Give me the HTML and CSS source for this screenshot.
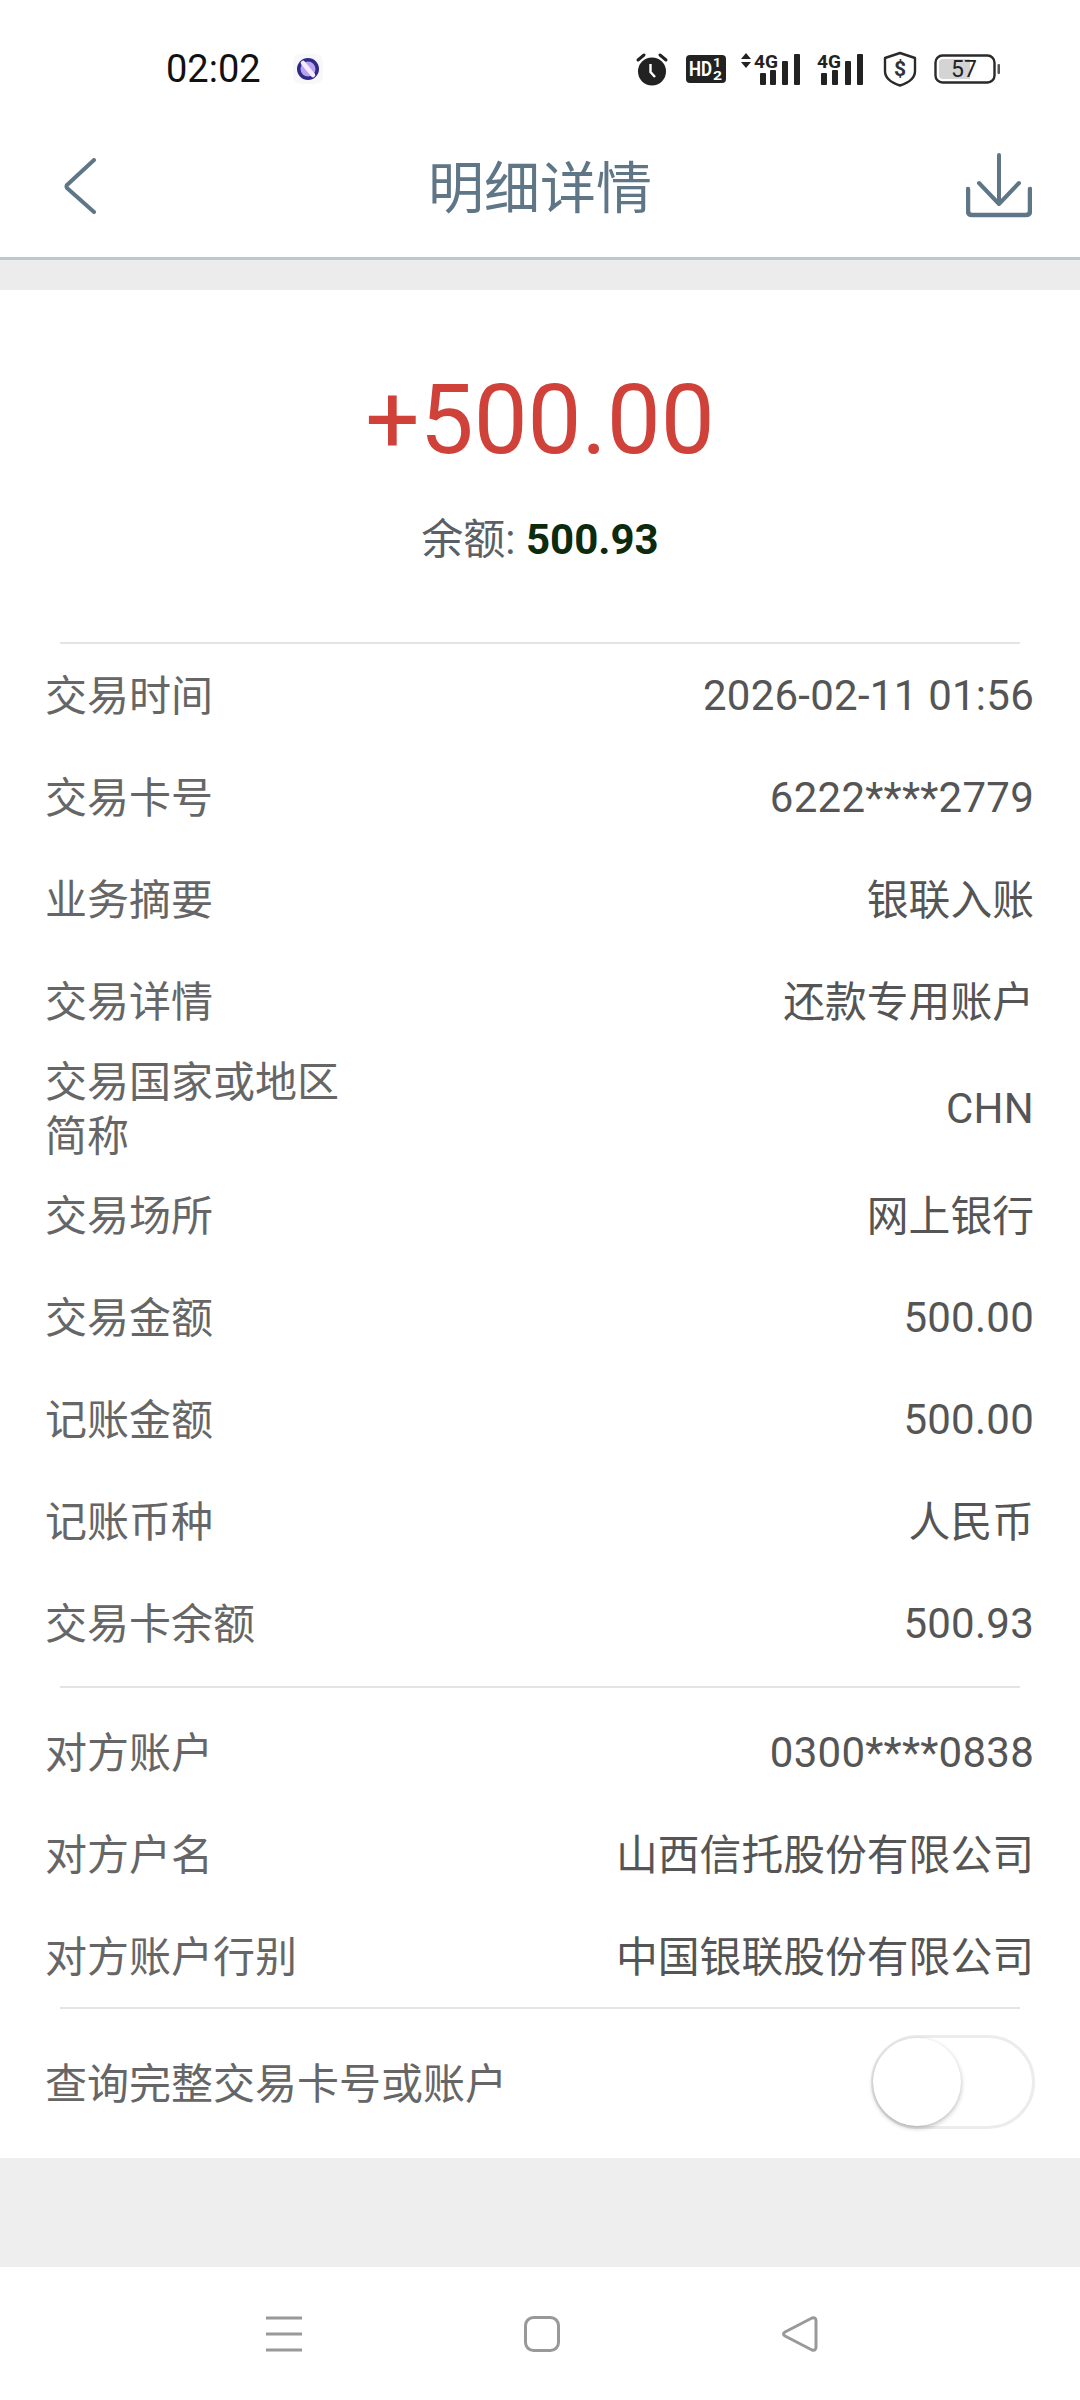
FILE: index.html
```html
<!DOCTYPE html>
<html lang="zh-CN">
<head>
<meta charset="utf-8">
<title>明细详情</title>
<link rel="stylesheet" href="styles.css">
</head>
<body>
<div class="page">
  <div class="status">
    <span class="time">02:02</span>
    <svg class="st-dot" width="30" height="30" viewBox="0 0 30 30"><rect width="30" height="30" rx="8" fill="#f8f8fa"/><circle cx="15" cy="15" r="11" fill="#2f2a86"/><circle cx="15" cy="15" r="7.5" fill="#b8a2ee"/><path d="M10 9 L20 21" stroke="#f6e9fb" stroke-width="4.5" stroke-linecap="round"/></svg>
    <svg class="st-alarm" width="34" height="34" viewBox="0 0 34 34"><circle cx="17" cy="19.5" r="14" fill="#222"/><path d="M3 8 L9 3 M31 8 L25 3" stroke="#222" stroke-width="3" stroke-linecap="round"/><path d="M15.5 12 V20 L20 25" stroke="#fff" stroke-width="2.4" fill="none"/></svg>
    <svg class="st-hd" width="40" height="28" viewBox="0 0 40 28"><rect width="40" height="28" rx="4" fill="#222"/><text x="3" y="21" class="st-hd-t" textLength="23" lengthAdjust="spacingAndGlyphs">HD</text><text x="27" y="12" class="st-hd-s" textLength="8" lengthAdjust="spacingAndGlyphs">1</text><text x="27" y="25" class="st-hd-s" textLength="9" lengthAdjust="spacingAndGlyphs">2</text></svg>
    <svg class="st-sig1" width="62" height="40" viewBox="0 0 62 40"><path d="M1 13 L6 7 L11 13 Z M1 16 L6 22 L11 16 Z" fill="#222"/><text x="14" y="22" class="st-4g" textLength="24" lengthAdjust="spacingAndGlyphs">4G</text><rect x="20" y="27" width="6" height="12" rx="1" fill="#222"/><rect x="30" y="24" width="6" height="15" rx="1" fill="#222"/><rect x="42" y="15" width="6" height="24" rx="1" fill="#222"/><rect x="54" y="8" width="6" height="31" rx="1" fill="#222"/></svg>
    <svg class="st-sig2" width="47" height="40" viewBox="0 0 47 40"><text x="0" y="22" class="st-4g" textLength="24" lengthAdjust="spacingAndGlyphs">4G</text><rect x="4" y="27" width="6" height="12" rx="1" fill="#222"/><rect x="15" y="24" width="6" height="15" rx="1" fill="#222"/><rect x="28" y="15" width="6" height="24" rx="1" fill="#222"/><rect x="40" y="8" width="6" height="31" rx="1" fill="#222"/></svg>
    <svg class="st-shield" width="34" height="36" viewBox="0 0 34 36"><path d="M17 2 L32 7 V20 C32 27 25 32 17 34.5 C9 32 2 27 2 20 V7 Z" fill="none" stroke="#2a2a2a" stroke-width="2.4" stroke-linejoin="round"/><text x="17" y="25" class="st-dollar" text-anchor="middle">$</text></svg>
    <svg class="st-batt" width="67" height="30" viewBox="0 0 67 30"><rect x="1.5" y="1.5" width="59" height="27" rx="7" fill="none" stroke="#2a2a2a" stroke-width="2.4"/><path d="M5 9 Q5 5 9 5 H36 V25 H9 Q5 25 5 21 Z" fill="#d4d4d4"/><rect x="63.5" y="10" width="2.5" height="10" rx="1" fill="#555"/><text x="30" y="23" class="st-batt-t" text-anchor="middle">57</text></svg>
  </div>

  <header class="nav">
    <div class="nav-l">
      <svg width="32" height="56" viewBox="0 0 32 56"><path d="M30 2 L3 27 Q2 28 3 30 L30 54" fill="none" stroke="#5f7686" stroke-width="4" stroke-linecap="round"/></svg>
    </div>
    <h1 class="nav-title">明细详情</h1>
    <div class="nav-r">
      <svg width="66" height="66" viewBox="0 0 66 66"><path d="M33 2 V51 M13 30 L33 51 L53 30" fill="none" stroke="#5f7686" stroke-width="4" stroke-linecap="round" stroke-linejoin="round"/><path d="M2 36 V58 Q2 62 6 62 H60 Q64 62 64 58 V36" fill="none" stroke="#5f7686" stroke-width="4.5" stroke-linecap="round"/></svg>
    </div>
  </header>

  <div class="gap-top"></div>

  <main class="card">
    <section class="hero">
      <div class="amount">+500.00</div>
      <div class="balance">余额: <b>500.93</b></div>
    </section>
    <hr class="rule">
    <section class="rows">
      <div class="row"><span class="k">交易时间</span><span class="v v-num">2026-02-11 01:56</span></div>
      <div class="row"><span class="k">交易卡号</span><span class="v v-num">6222****2779</span></div>
      <div class="row"><span class="k">业务摘要</span><span class="v v-cn">银联入账</span></div>
      <div class="row"><span class="k">交易详情</span><span class="v v-cn">还款专用账户</span></div>
      <div class="row row-tall"><span class="k k-wrap">交易国家或地区简称</span><span class="v v-num">CHN</span></div>
      <div class="row"><span class="k">交易场所</span><span class="v v-cn">网上银行</span></div>
      <div class="row"><span class="k">交易金额</span><span class="v v-num">500.00</span></div>
      <div class="row"><span class="k">记账金额</span><span class="v v-num">500.00</span></div>
      <div class="row"><span class="k">记账币种</span><span class="v v-cn">人民币</span></div>
      <div class="row"><span class="k">交易卡余额</span><span class="v v-num">500.93</span></div>
    </section>
    <hr class="rule rule-mid">
    <section class="rows">
      <div class="row"><span class="k">对方账户</span><span class="v v-num">0300****0838</span></div>
      <div class="row"><span class="k">对方户名</span><span class="v v-cn">山西信托股份有限公司</span></div>
      <div class="row"><span class="k">对方账户行别</span><span class="v v-cn">中国银联股份有限公司</span></div>
    </section>
    <hr class="rule">
    <div class="row row-toggle">
      <span class="k">查询完整交易卡号或账户</span>
      <span class="switch"><span class="knob"></span></span>
    </div>
  </main>

  <div class="gap-bottom"></div>

  <footer class="sysnav">
    <svg class="sn-menu" width="36" height="36" viewBox="0 0 36 36"><path d="M0 2 H36 M0 18 H36 M0 34 H36" stroke="#999" stroke-width="3"/></svg>
    <svg class="sn-home" width="36" height="36" viewBox="0 0 36 36"><rect x="1.5" y="1.5" width="33" height="33" rx="8" fill="none" stroke="#999" stroke-width="3"/></svg>
    <svg class="sn-back" width="36" height="36" viewBox="0 0 36 36"><path d="M3 16 L30 2 Q34 1 34 5 V31 Q34 35 30 34 L3 20 Q0 18 3 16 Z" fill="none" stroke="#999" stroke-width="3" stroke-linejoin="round"/></svg>
  </footer>
</div>
</body>
</html>
```
FILE: styles.css
```css
* { box-sizing: border-box; }
html, body { margin: 0; padding: 0; background: #fff; }
body { font-family: Roboto, "Noto Sans CJK SC", sans-serif; }
.page { width: 1080px; height: 2400px; display: flex; flex-direction: column; overflow: hidden; }

.status { height: 117px; padding: 21px 0 0 166px; display: flex; align-items: center; color: #111; }
.time { font-size: 38px; width: 94px; white-space: nowrap; }
.st-dot { margin-left: 33px; }
.st-alarm { margin-left: 312px; }
.st-hd { margin-left: 17px; }
.st-sig1 { margin-left: 14px; margin-top: -6px; }
.st-sig2 { margin-left: 15px; margin-top: -6px; }
.st-shield { margin-left: 19px; }
.st-batt { margin-left: 17px; }
.st-hd-t { font: 700 20px Roboto, sans-serif; fill: #fff; }
.st-hd-s { font: 700 12px Roboto, sans-serif; fill: #fff; }
.st-4g { font: 700 19px Roboto, sans-serif; fill: #222; }
.st-dollar { font: 700 21px Roboto, sans-serif; fill: #333; }
.st-batt-t { font: 400 23px Roboto, sans-serif; fill: #222; }

.nav { height: 143px; border-bottom: 3px solid #b9c9ce; display: flex; align-items: center; background: #fff; }
.nav-l, .nav-r { width: 160px; display: flex; align-items: center; }
.nav-l { padding-left: 64px; margin-bottom: 3px; }
.nav-r { justify-content: flex-end; padding-right: 48px; margin-bottom: 2px; }
.nav-l svg, .nav-r svg { display: block; }
.nav-title { flex: 1; margin: 0 0 6px; text-align: center; font-size: 56px; font-weight: 400; color: #5f7686; font-family: "Noto Sans CJK SC", sans-serif; line-height: 1.2; }

.gap-top { height: 30px; background: #ececec; }
.card { height: 1868px; background: #fff; display: flex; flex-direction: column; }

.hero { height: 352px; padding-top: 73px; text-align: center; }
.amount { font-size: 96px; line-height: 114px; color: #d0413a; }
.balance { margin-top: 35px; font-size: 42px; line-height: 56px; color: #5a6066; font-family: Roboto, "Noto Sans CJK SC", sans-serif; }
.balance b { font-weight: 700; color: #0c2a0c; }

.rule { height: 2px; margin: 0 60px; border: 0; background: #e4e4e4; flex: none; }
.rule-mid { margin-top: 12px; margin-bottom: 13px; }

.row { height: 102px; padding: 0 46px 0 45px; display: flex; align-items: center; justify-content: space-between; flex: none; }
.row-tall { height: 112px; }
.row-toggle { height: 149px; padding-right: 45px; }
.k { font-size: 42px; line-height: 54px; color: #666; font-family: "Noto Sans CJK SC", sans-serif; margin-bottom: 5px; }
.k-wrap { width: 300px; }
.v { font-size: 42px; color: #555; font-family: Roboto, "Noto Sans CJK SC", sans-serif; }
.v-num { letter-spacing: 0.25px; }
.v-cn { font-size: 41.8px; line-height: 54px; margin-bottom: 5px; font-family: "Noto Sans CJK SC", sans-serif; }

.switch { width: 164px; height: 94px; margin-top: -3px; border: 3px solid #ececec; border-radius: 47px; background: #fff; display: flex; align-items: center; }
.knob { width: 88px; height: 88px; margin-left: -1px; border-radius: 50%; background: #fff; box-shadow: 0 2px 5px rgba(0,0,0,.28); flex: none; }

.gap-bottom { height: 109px; background: #eeeeee; }
.sysnav { flex: 1; display: flex; align-items: flex-start; padding-top: 49px; background: #fff; }
.sysnav svg { display: block; }
.sn-menu { margin-left: 266px; }
.sn-home { margin-left: 222px; }
.sn-back { margin-left: 222px; }
```
